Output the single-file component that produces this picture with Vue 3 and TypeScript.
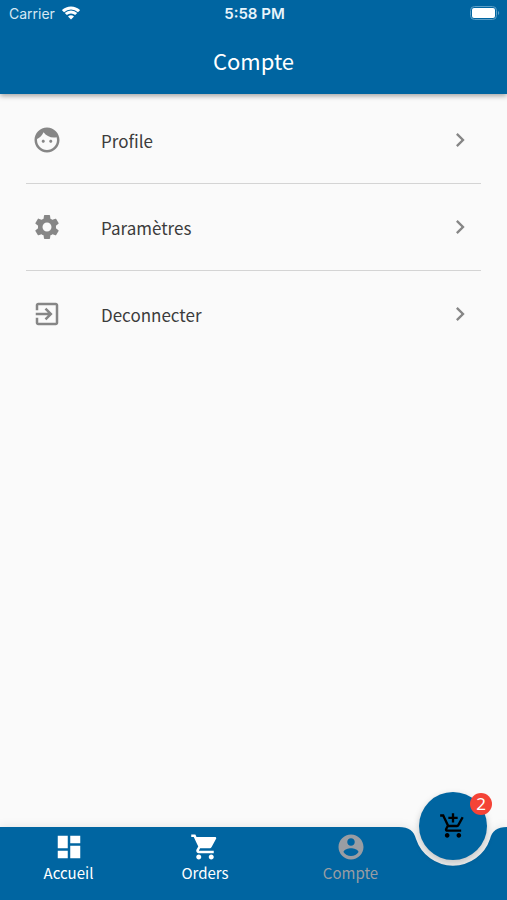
<script setup lang="ts">
import { ref } from 'vue'

interface Entry {
  label: string
  icon: string
}

const entries: Entry[] = [
  {
    label: 'Profile',
    icon: 'M9 11.75c-.69 0-1.25.56-1.25 1.25s.56 1.25 1.25 1.25 1.25-.56 1.25-1.25-.56-1.25-1.25-1.25zm6 0c-.69 0-1.25.56-1.25 1.25s.56 1.25 1.25 1.25 1.25-.56 1.25-1.25-.56-1.25-1.25-1.25zM12 2C6.48 2 2 6.48 2 12s4.48 10 10 10 10-4.48 10-10S17.52 2 12 2zm0 18c-4.41 0-8-3.59-8-8 0-.29.02-.58.05-.86 2.36-1.05 4.23-2.98 5.21-5.37C11.07 8.33 14.05 10 17.42 10c.78 0 1.53-.09 2.25-.26.21.71.33 1.47.33 2.26 0 4.41-3.59 8-8 8z',
  },
  {
    label: 'Paramètres',
    icon: 'M19.14 12.94c.04-.3.06-.61.06-.94 0-.32-.02-.64-.07-.94l2.03-1.58c.18-.14.23-.41.12-.61l-1.92-3.32c-.12-.22-.37-.29-.59-.22l-2.39.96c-.5-.38-1.03-.7-1.62-.94l-.36-2.54c-.04-.24-.24-.41-.48-.41h-3.84c-.24 0-.43.17-.47.41l-.36 2.54c-.59.24-1.13.57-1.62.94l-2.39-.96c-.22-.08-.47 0-.59.22L2.74 8.87c-.12.21-.08.47.12.61l2.03 1.58c-.05.3-.09.63-.09.94s.02.64.07.94l-2.03 1.58c-.18.14-.23.41-.12.61l1.92 3.32c.12.22.37.29.59.22l2.39-.96c.5.38 1.03.7 1.62.94l.36 2.54c.05.24.24.41.48.41h3.84c.24 0 .44-.17.47-.41l.36-2.54c.59-.24 1.13-.56 1.62-.94l2.39.96c.22.08.47 0 .59-.22l1.92-3.32c.12-.22.07-.47-.12-.61l-2.01-1.58zM12 15.6c-1.98 0-3.6-1.62-3.6-3.6s1.62-3.6 3.6-3.6 3.6 1.62 3.6 3.6-1.62 3.6-3.6 3.6z',
  },
  {
    label: 'Deconnecter',
    icon: 'M10.09 15.59L11.5 17l5-5-5-5-1.41 1.41L12.67 11H3v2h9.67l-2.58 2.59zM19 3H5c-1.11 0-2 .9-2 2v4h2V5h14v14H5v-4H3v4c0 1.1.89 2 2 2h14c1.1 0 2-.9 2-2V5c0-1.1-.9-2-2-2z',
  },
]

const tabs: Entry[] = [
  { label: 'Accueil', icon: 'M3 13h8V3H3v10zm0 8h8v-6H3v6zm10 0h8V11h-8v10zm0-18v6h8V3h-8z' },
  {
    label: 'Orders',
    icon: 'M7 18c-1.1 0-1.99.9-1.99 2S5.9 22 7 22s2-.9 2-2-.9-2-2-2zM1 2v2h2l3.6 7.59-1.35 2.45c-.16.28-.25.61-.25.96 0 1.1.9 2 2 2h12v-2H7.42c-.14 0-.25-.11-.25-.25l.03-.12.9-1.63h7.45c.75 0 1.41-.41 1.75-1.03l3.58-6.49c.08-.14.12-.31.12-.48 0-.55-.45-1-1-1H5.21l-.94-2H1zm16 16c-1.1 0-1.99.9-1.99 2s.89 2 1.99 2 2-.9 2-2-.9-2-2-2z',
  },
  {
    label: 'Compte',
    icon: 'M12 2C6.48 2 2 6.48 2 12s4.48 10 10 10 10-4.48 10-10S17.52 2 12 2zm0 3c1.66 0 3 1.34 3 3s-1.34 3-3 3-3-1.34-3-3 1.34-3 3-3zm0 14.2c-2.5 0-4.71-1.28-6-3.22.03-1.99 4-3.08 6-3.08 1.99 0 5.97 1.09 6 3.08-1.29 1.94-3.5 3.22-6 3.22z',
  },
]

const current = ref('Compte')
const cartCount = ref(2)
</script>

<template>
  <div class="screen">
    <header class="top">
      <div class="status">
        <span class="carrier">
          Carrier
          <svg class="wifi" viewBox="0 0 18 14" aria-hidden="true">
            <path d="M1 5.2a11.5 11.5 0 0 1 16 0" />
            <path d="M3.8 8a7.5 7.5 0 0 1 10.4 0" />
            <path class="dot" d="M9 13.6 6 10.6a4.3 4.3 0 0 1 6 0z" />
          </svg>
        </span>
        <span class="clock">5:58 PM</span>
        <svg class="battery" viewBox="0 0 31 14" aria-hidden="true">
          <rect class="shell" x="1.5" y="0.5" width="26" height="13" rx="4" />
          <rect class="charge" x="3" y="2" width="23" height="10" rx="2" />
          <path class="tip" d="M29 5v4c1.6-.6 1.6-3.4 0-4z" />
        </svg>
      </div>
      <h1>Compte</h1>
    </header>

    <main>
      <ul class="list">
        <li v-for="entry in entries" :key="entry.label">
          <button class="row" type="button">
            <svg class="icon" viewBox="0 0 24 24" aria-hidden="true"><path :d="entry.icon" /></svg>
            <span class="label">{{ entry.label }}</span>
            <svg class="chevron" viewBox="0 0 24 24" aria-hidden="true">
              <path d="M8.59 16.59 13.17 12 8.59 7.41 10 6l6 6-6 6z" />
            </svg>
          </button>
        </li>
      </ul>
    </main>

    <div class="bottom">
      <div class="bar" aria-hidden="true">
        <div class="fill"></div>
        <svg class="notch" viewBox="0 0 108 73">
          <path d="M0 0C10 0 15 4 17 12A39 39 0 0 0 91 12C93 4 98 0 108 0V73H0z" />
        </svg>
      </div>
      <nav class="tabs">
        <button
          v-for="tab in tabs"
          :key="tab.label"
          type="button"
          class="tab"
          :class="{ current: tab.label === current }"
          @click="current = tab.label"
        >
          <svg class="icon" viewBox="0 0 24 24" aria-hidden="true"><path :d="tab.icon" /></svg>
          <span>{{ tab.label }}</span>
        </button>
      </nav>
      <button class="cart" type="button">
        <svg viewBox="0 0 24 24" aria-hidden="true">
          <path
            d="M11 9h2V6h3V4h-3V1h-2v3H8v2h3v3zm-4 9c-1.1 0-1.99.9-1.99 2S5.9 22 7 22s2-.9 2-2-.9-2-2-2zm10 0c-1.1 0-1.99.9-1.99 2s.89 2 1.99 2 2-.9 2-2-.9-2-2-2zm-9.83-3.25l.03-.12.9-1.63h7.45c.75 0 1.41-.41 1.75-1.03l3.86-7.01L19.42 4h-.01l-1.1 2-2.76 5H8.53l-.13-.27L6.16 6l-.95-2-.94-2H1v2h2l3.6 7.59-1.35 2.45c-.16.28-.25.61-.25.96 0 1.1.9 2 2 2h12v-2H7.42c-.13 0-.25-.11-.25-.25z"
          />
        </svg>
        <span class="badge">{{ cartCount }}</span>
      </button>
    </div>
  </div>
</template>

<style>
body {
  margin: 0;
  background: #fafafa;
}
</style>

<style scoped>
.screen {
  --blue: #0065a1;
  display: flex;
  flex-direction: column;
  min-height: 100vh;
  background: #fafafa;
  color: #3c3c3c;
  font-family: 'Noto Sans CJK SC', 'Noto Sans', sans-serif;
}

button {
  margin: 0;
  padding: 0;
  border: 0;
  background: none;
  color: inherit;
  font: inherit;
  cursor: pointer;
}

svg {
  display: block;
  fill: currentColor;
}

.top {
  background: var(--blue);
  color: #fff;
  box-shadow: 0 2px 5px rgba(0, 0, 0, 0.35);
}

.status {
  display: grid;
  grid-template-columns: 1fr auto 1fr;
  align-items: center;
  height: 26px;
  padding: 0 7px 0 9px;
  font-family: Inter, sans-serif;
  font-size: 14px;
}

.carrier {
  display: flex;
  align-items: center;
  gap: 7px;
  color: #d6e8f3;
}

.wifi {
  width: 18px;
  height: 14px;
  fill: none;
  stroke: #fff;
  stroke-width: 3;
}

.wifi .dot {
  fill: #fff;
  stroke: none;
}

.clock {
  color: #e8f4fb;
  font-size: 15px;
  font-weight: 600;
}

.battery {
  justify-self: end;
  width: 31px;
  height: 14px;
}

.shell {
  fill: none;
  stroke: #5c9fc7;
}

.charge {
  fill: #fff;
}

.tip {
  fill: #5c9fc7;
}

h1 {
  margin: 0;
  height: 68px;
  font-size: 22px;
  font-weight: 400;
  line-height: 68px;
  text-align: center;
}

main {
  flex: 1;
}

.list {
  margin: 0;
  padding: 3px 26px;
  list-style: none;
}

li + li {
  border-top: 1px solid #d4d4d4;
}

.row {
  display: flex;
  align-items: center;
  width: 100%;
  height: 86px;
  padding: 0 7px 0 6px;
  text-align: left;
}

.icon {
  width: 30px;
  height: 30px;
}

.row .icon,
.chevron {
  color: #868686;
}

.label {
  flex: 1;
  padding-left: 39px;
  font-size: 17px;
}

.chevron {
  width: 28px;
  height: 28px;
}

.bottom {
  position: sticky;
  bottom: 0;
  height: 73px;
}

.bar {
  position: absolute;
  inset: 0;
  display: flex;
  color: var(--blue);
  filter: drop-shadow(0 -1px 4px rgba(0, 0, 0, 0.08));
}

.fill {
  flex: 1;
  background: var(--blue);
}

.notch {
  width: 108px;
  height: 73px;
}

.tabs {
  position: relative;
  display: grid;
  grid-template-columns: 137fr 136fr 155fr;
  height: 100%;
  padding-right: 79px;
  color: #fff;
}

.tab {
  display: flex;
  flex-direction: column;
  align-items: center;
  padding-top: 5px;
  font-size: 15px;
  line-height: 22px;
}

.tab.current {
  color: #999da3;
}

.cart {
  position: absolute;
  top: -35px;
  right: 20px;
  display: grid;
  place-items: center;
  width: 68px;
  height: 68px;
  border-radius: 50%;
  background: var(--blue);
  color: #000;
  box-shadow: 0 3px 7px rgba(0, 0, 0, 0.22);
}

.cart svg {
  width: 28px;
  height: 28px;
}

.badge {
  position: absolute;
  top: 1px;
  right: -5px;
  width: 22px;
  height: 22px;
  border-radius: 50%;
  background: #f44336;
  color: #fff;
  font-family: 'Noto Sans', sans-serif;
  font-size: 17px;
  line-height: 22px;
  text-align: center;
}
</style>
